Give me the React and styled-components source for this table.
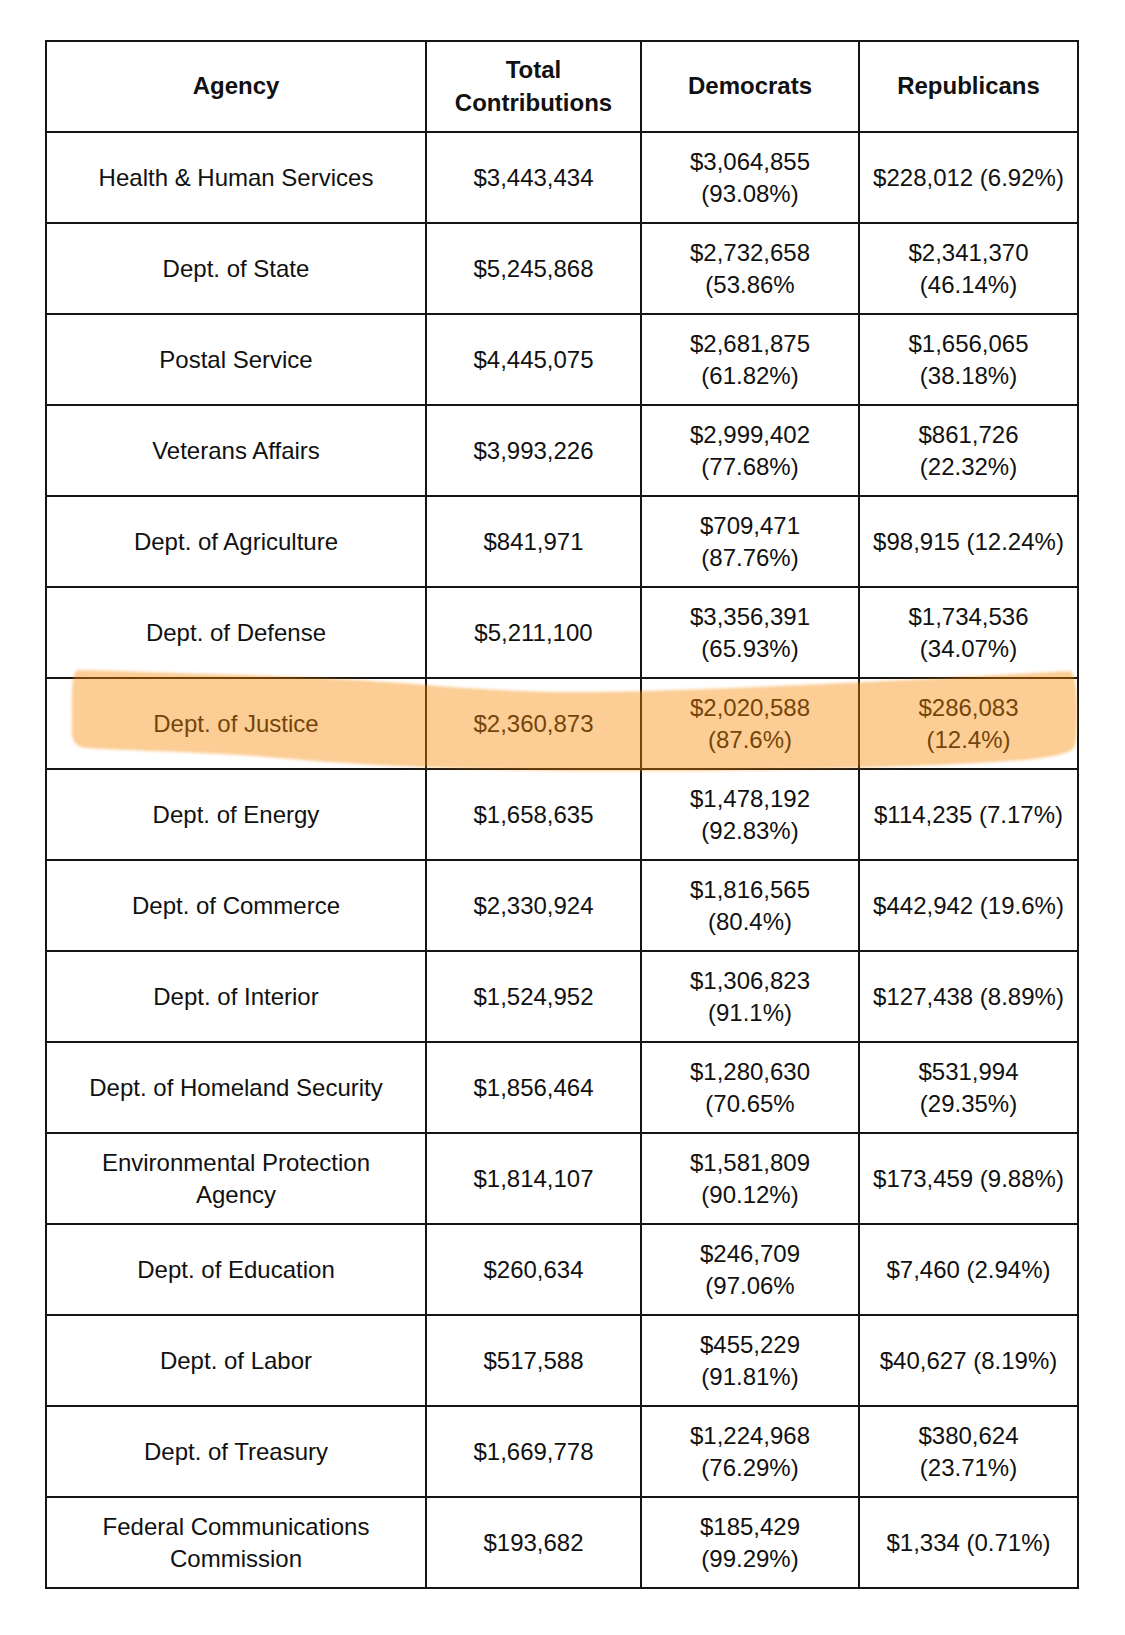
import React from "react";
import styled, { createGlobalStyle } from "styled-components";

const Global = createGlobalStyle`
  html, body { margin: 0; padding: 0; background: #ffffff; }
  body { font-family: "Liberation Sans", Helvetica, Arial, sans-serif; color: #111; }
`;

const Page = styled.div`
  width: 1125px;
  min-height: 1635px;
  padding: 40px 0 0 45px;
  box-sizing: border-box;
`;

const TableWrap = styled.div`
  position: relative;
  width: 1034px;
`;

const Grid = styled.div`
  display: grid;
  grid-template-columns: 380px 215px 218px 219px;
  grid-auto-rows: 91px;
  border-top: 2px solid #151515;
  border-left: 2px solid #151515;
`;

const Cell = styled.div`
  box-sizing: border-box;
  border-right: 2px solid #151515;
  border-bottom: 2px solid #151515;
  display: flex;
  flex-direction: column;
  align-items: center;
  justify-content: center;
  text-align: center;
  font-size: 24px;
  line-height: 32.5px;
  font-weight: ${(p) => (p.$head ? 700 : 400)};
  white-space: nowrap;
  padding-top: ${(p) => (p.$head ? "0" : "1px")};
`;

const Line = styled.span`
  display: block;
`;

const Highlight = styled.svg`
  position: absolute;
  left: 0;
  top: 0;
  width: 1034px;
  height: 1549px;
  pointer-events: none;
`;

const headers = [["Agency"], ["Total", "Contributions"], ["Democrats"], ["Republicans"]];

const rows = [
  [["Health & Human Services"], ["$3,443,434"], ["$3,064,855", "(93.08%)"], ["$228,012 (6.92%)"]],
  [["Dept. of State"], ["$5,245,868"], ["$2,732,658", "(53.86%"], ["$2,341,370", "(46.14%)"]],
  [["Postal Service"], ["$4,445,075"], ["$2,681,875", "(61.82%)"], ["$1,656,065", "(38.18%)"]],
  [["Veterans Affairs"], ["$3,993,226"], ["$2,999,402", "(77.68%)"], ["$861,726", "(22.32%)"]],
  [["Dept. of Agriculture"], ["$841,971"], ["$709,471", "(87.76%)"], ["$98,915 (12.24%)"]],
  [["Dept. of Defense"], ["$5,211,100"], ["$3,356,391", "(65.93%)"], ["$1,734,536", "(34.07%)"]],
  [["Dept. of Justice"], ["$2,360,873"], ["$2,020,588", "(87.6%)"], ["$286,083", "(12.4%)"]],
  [["Dept. of Energy"], ["$1,658,635"], ["$1,478,192", "(92.83%)"], ["$114,235 (7.17%)"]],
  [["Dept. of Commerce"], ["$2,330,924"], ["$1,816,565", "(80.4%)"], ["$442,942 (19.6%)"]],
  [["Dept. of Interior"], ["$1,524,952"], ["$1,306,823", "(91.1%)"], ["$127,438 (8.89%)"]],
  [["Dept. of Homeland Security"], ["$1,856,464"], ["$1,280,630", "(70.65%"], ["$531,994", "(29.35%)"]],
  [["Environmental Protection", "Agency"], ["$1,814,107"], ["$1,581,809", "(90.12%)"], ["$173,459 (9.88%)"]],
  [["Dept. of Education"], ["$260,634"], ["$246,709", "(97.06%"], ["$7,460 (2.94%)"]],
  [["Dept. of Labor"], ["$517,588"], ["$455,229", "(91.81%)"], ["$40,627 (8.19%)"]],
  [["Dept. of Treasury"], ["$1,669,778"], ["$1,224,968", "(76.29%)"], ["$380,624", "(23.71%)"]],
  [["Federal Communications", "Commission"], ["$193,682"], ["$185,429", "(99.29%)"], ["$1,334 (0.71%)"]],
];

function CellLines({ lines, head }) {
  return (
    <Cell $head={head}>
      {lines.map((l, i) => (
        <Line key={i}>{l}</Line>
      ))}
    </Cell>
  );
}

// brush-stroke path, coordinates relative to table's top-left (page 45,40)
const stroke =
  "M 32 630 " +
  "C 60 630, 120 633, 200 635 " +
  "C 290 638, 350 642, 420 648 " +
  "C 480 652, 540 653, 600 651 " +
  "C 700 648, 800 643, 900 638 " +
  "C 960 635, 1000 632, 1026 631 " +
  "C 1034 640, 1033 690, 1030 706 " +
  "C 1028 713, 1010 716, 990 719 " +
  "C 920 725, 820 728, 700 730 " +
  "C 600 732, 520 731, 440 729 " +
  "C 360 727, 300 724, 210 716 " +
  "C 130 711, 70 710, 40 708 " +
  "C 28 705, 26 700, 27 680 " +
  "C 27 655, 26 634, 32 630 Z";

export default function App() {
  return (
    <>
      <Global />
      <Page>
        <TableWrap>
          <Grid>
            {headers.map((h, i) => (
              <CellLines key={"h" + i} lines={h} head />
            ))}
            {rows.map((r, ri) =>
              r.map((c, ci) => <CellLines key={ri + "-" + ci} lines={c} />)
            )}
          </Grid>
          <Highlight viewBox="0 0 1034 1549">
            <defs>
              <filter id="soft" x="-5%" y="-20%" width="110%" height="140%">
                <feGaussianBlur stdDeviation="1.6" />
              </filter>
            </defs>
            <path d={stroke} fill="rgb(248,136,5)" fillOpacity="0.42" filter="url(#soft)" />
          </Highlight>
        </TableWrap>
      </Page>
    </>
  );
}
